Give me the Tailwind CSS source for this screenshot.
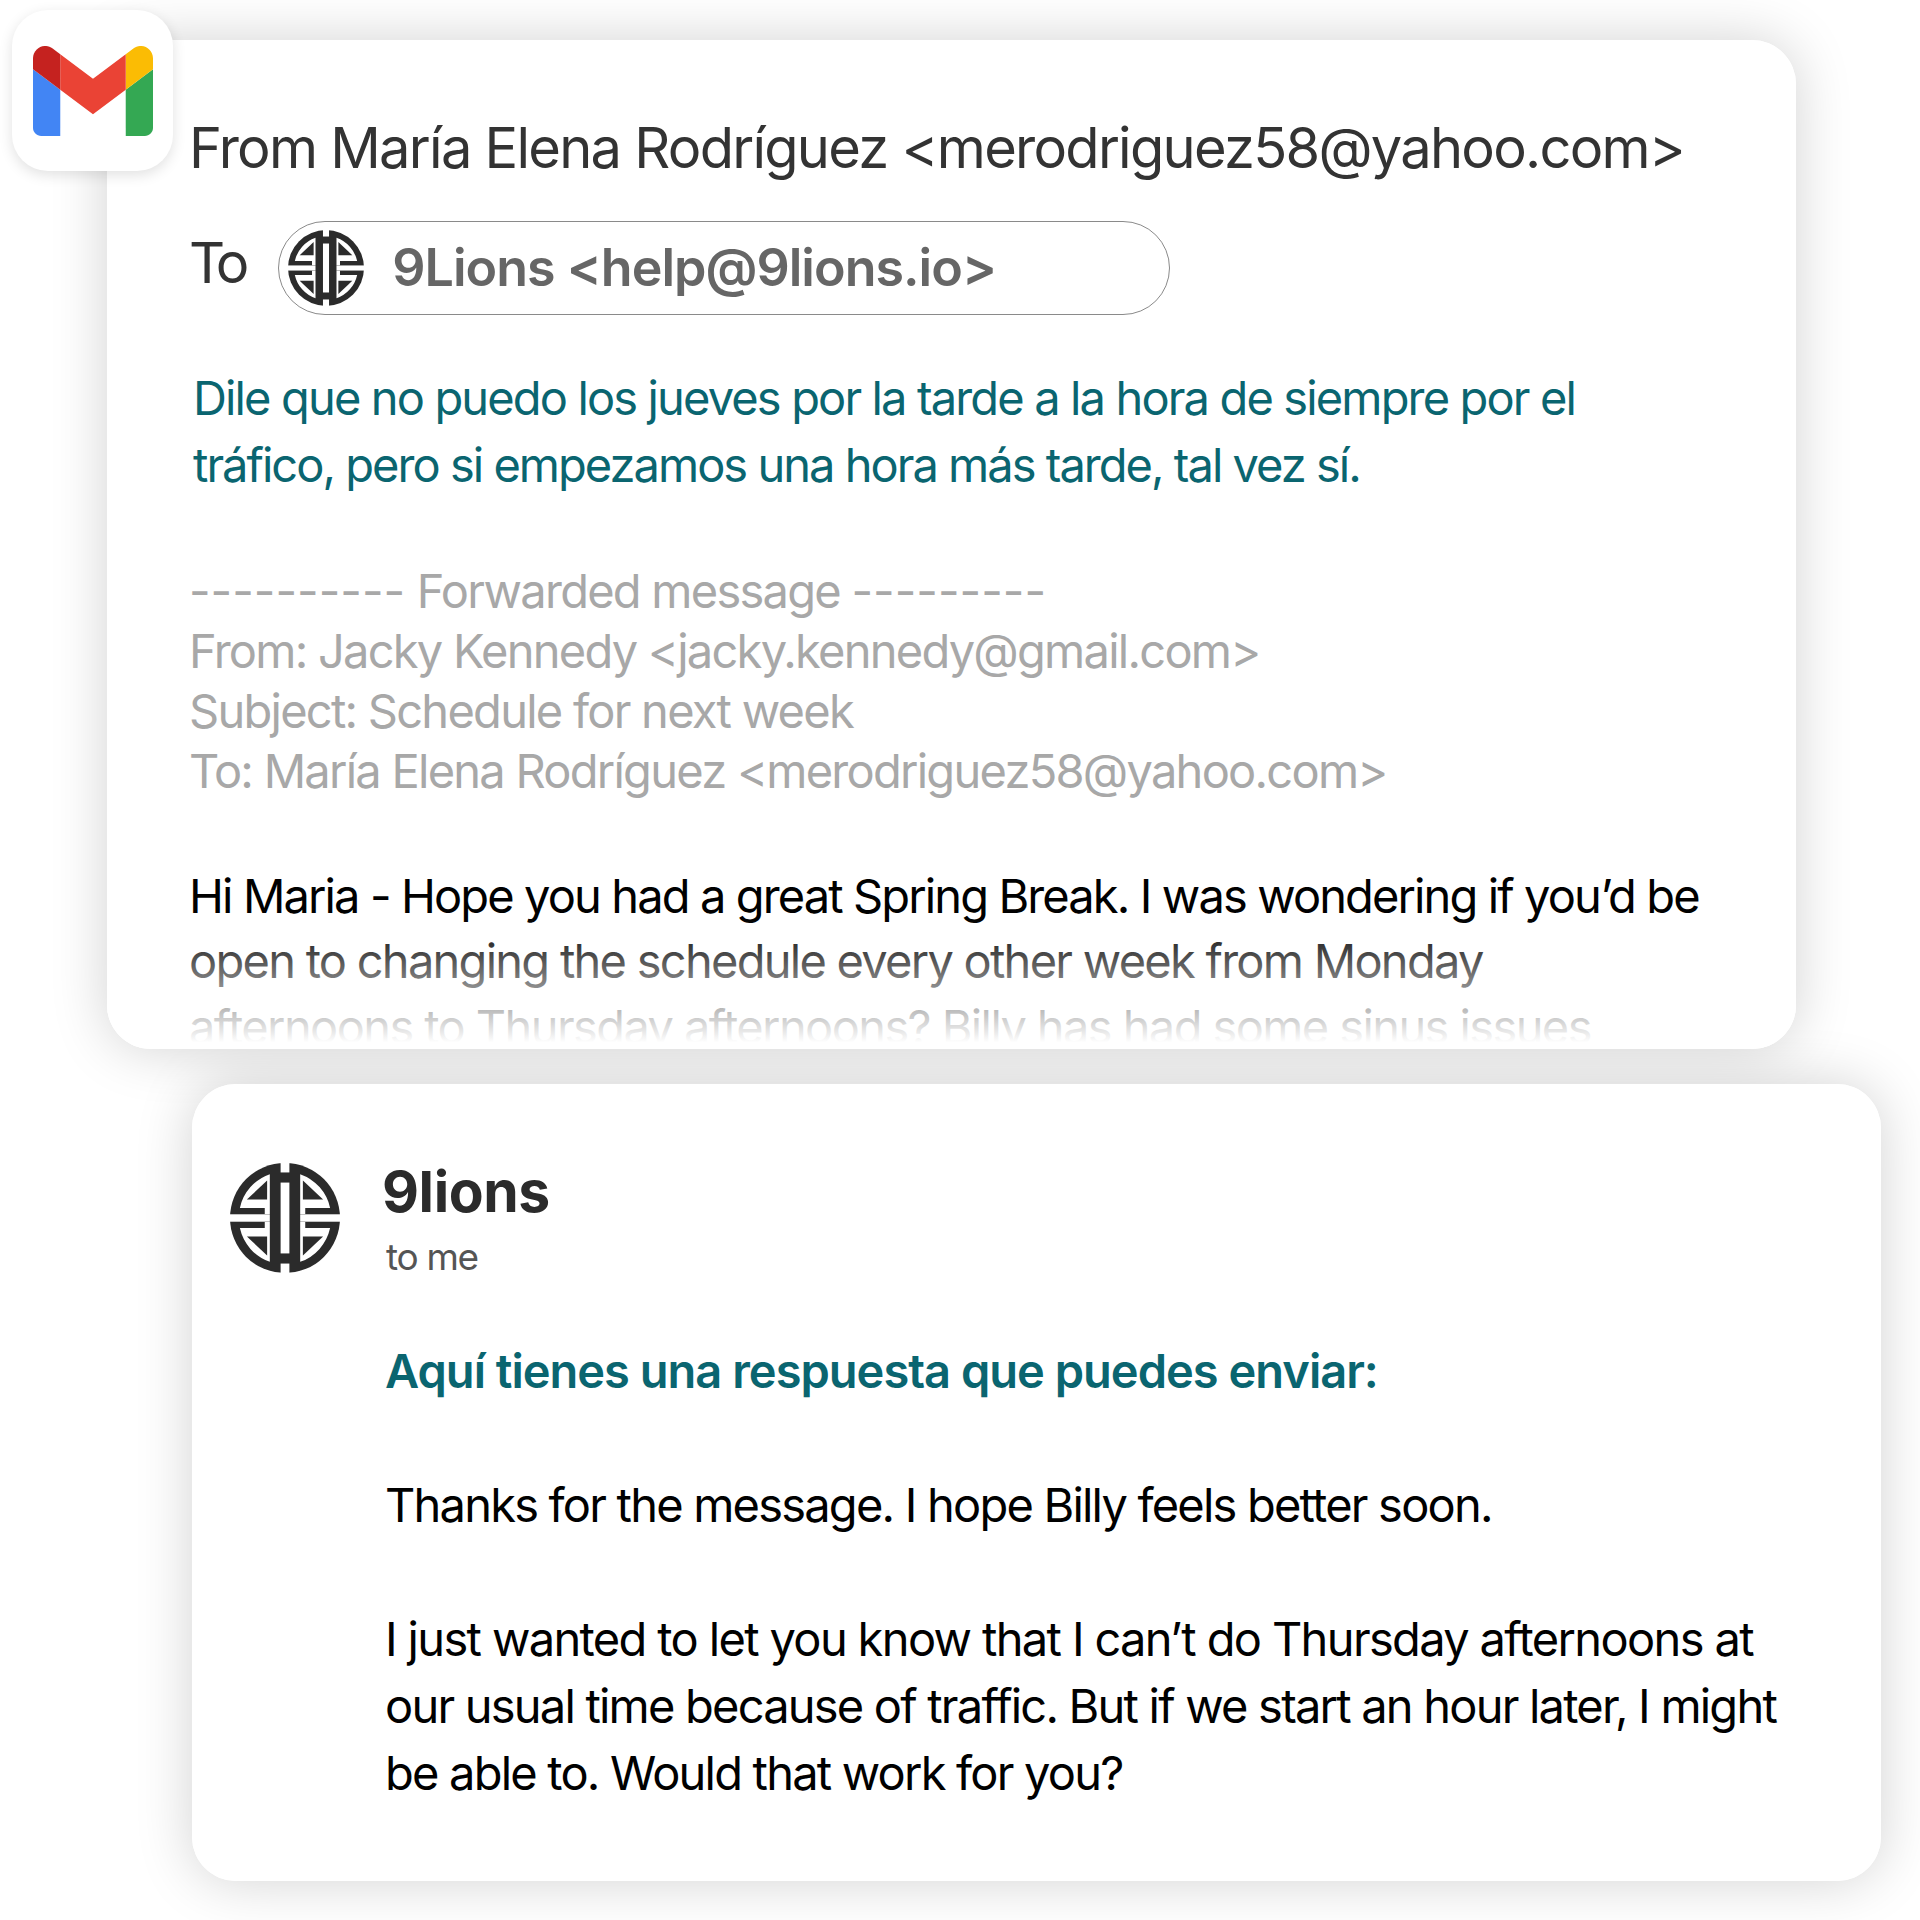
<!DOCTYPE html>
<html><head><meta charset="utf-8"><script src="https://cdn.jsdelivr.net/npm/@tailwindcss/browser@4"></script></head>
<body class="bg-white">
<svg class="absolute w-0 h-0"><defs>
<g id="q"><path fill="#fff" d="M-45-130A137 137 0 0 0-133.7-30H-60V-12H-45Z"/><path fill="#2b2b2b" d="M-53-111L-113-55H-53Z"/><rect fill="#fff" x="-170" y="-11" width="125" height="11"/></g>
<symbol id="lions" viewBox="-163 -163 326 326"><circle r="163" fill="#2b2b2b"/><use href="#q"/><use href="#q" transform="scale(-1 1)"/><use href="#q" transform="scale(1 -1)"/><use href="#q" transform="scale(-1 -1)"/><rect fill="#fff" x="-13" y="-105" width="26" height="210"/><rect fill="#fff" x="-13" y="-170" width="26" height="35"/><rect fill="#fff" x="-13" y="135" width="26" height="35"/></symbol>
</defs></svg>
<div class="relative isolate w-[1920px] h-[1920px] overflow-hidden bg-white pt-[40px] font-['Inter',sans-serif]">
  <div class="absolute left-[12px] top-[10px] z-20 w-[161px] h-[161px] rounded-[36px] bg-white shadow-[0_4px_14px_rgba(0,0,0,0.12)] flex items-center justify-center">
    <svg class="w-[120px] h-[90px]" viewBox="52 42 88 66"><path fill="#4285f4" d="M58 108h14V74L52 59v43c0 3.32 2.69 6 6 6"/><path fill="#34a853" d="M120 108h14c3.32 0 6-2.69 6-6V59l-20 15"/><path fill="#fbbc04" d="M120 48v26l20-15v-8c0-7.42-8.47-11.65-14.4-7.2"/><path fill="#ea4335" d="M72 74V48l24 18 24-18v26L96 92"/><path fill="#c5221f" d="M52 51v8l20 15V48l-5.6-4.2c-5.94-4.45-14.4-.22-14.4 7.2"/></svg>
  </div>
  <div class="relative ml-[107px] w-[1689px] h-[1009px] rounded-[44px] bg-white">
    <div class="absolute inset-0 -z-10 rounded-[44px] shadow-[0_0_56px_rgba(0,0,0,0.18)]"></div>
    <div class="relative h-full overflow-hidden rounded-[44px] pl-[82px] pt-[74px] whitespace-nowrap">
      <div class="text-[56px] leading-[68px] text-[#333] tracking-[-0.031em]">From María Elena Rodríguez &lt;merodriguez58@yahoo.com&gt;</div>
      <div class="mt-[39px] flex items-center gap-[34px]">
        <span class="text-[56px] leading-[68px] text-[#333] -mt-[10px] tracking-[-0.09em]">To</span>
        <div class="w-[892px] h-[94px] rounded-full border-[1.5px] border-[#8a8a8a] flex items-center pl-[9px] gap-[28px]">
          <svg class="w-[76px] h-[76px] shrink-0"><use href="#lions"/></svg>
          <span class="text-[52px] font-semibold text-[#666] tracking-[-0.019em]">9Lions &lt;help@9lions.io&gt;</span>
        </div>
      </div>
      <div class="mt-[49px] ml-[4px] text-[47px] leading-[67px] text-[#0a6570] tracking-[-0.0395em]">
        <div>Dile que no puedo los jueves por la tarde a la hora de siempre por el</div>
        <div class="tracking-[-0.042em]">tráfico, pero si empezamos una hora más tarde, tal vez sí.</div>
      </div>
      <div class="mt-[63px] text-[47px] leading-[60px] text-[#a8a8a8] tracking-[-0.037em]">
        <div><span class="tracking-[0em]">----------</span> Forwarded message <span class="tracking-[0em]">---------</span></div>
        <div>From: Jacky Kennedy &lt;jacky.kennedy@gmail.com&gt;</div>
        <div>Subject: Schedule for next week</div>
        <div>To: María Elena Rodríguez &lt;merodriguez58@yahoo.com&gt;</div>
      </div>
      <div class="mt-[62px] text-[47px] leading-[65px] text-black tracking-[-0.04em]">
        <div>Hi Maria - Hope you had a great Spring Break. I was wondering if you’d be</div>
        <div class="tracking-[-0.037em]">open to changing the schedule every other week from Monday</div>
        <div class="tracking-[-0.034em] mt-[1px]">afternoons to Thursday afternoons? Billy has had some sinus issues</div>
      </div>
      <div class="absolute left-0 right-0 bottom-0 h-[130px] bg-gradient-to-t from-white from-5% to-white/0"></div>
    </div>
  </div>
  <div class="relative mt-[35px] ml-[192px] w-[1689px] h-[797px] rounded-[44px] bg-white pl-[38px] pt-[79px] whitespace-nowrap">
    <div class="absolute inset-0 -z-10 rounded-[44px] shadow-[0_0_56px_rgba(0,0,0,0.18)]"></div>
    <div class="flex gap-[42px]">
      <svg class="w-[110px] h-[110px] shrink-0"><use href="#lions"/></svg>
      <div>
        <div class="text-[57px] leading-[70px] font-bold text-[#2b2b2b] -mt-[6px] tracking-[-0.007em]">9lions</div>
        <div class="text-[37px] leading-[50px] text-[#555] ml-[4px] mt-[5px] tracking-[-0.035em]">to me</div>
      </div>
    </div>
    <div class="ml-[155px] mt-[55px] text-[47px] leading-[67px] text-black tracking-[-0.038em]">
      <div class="font-semibold text-[#0a6570] tracking-[-0.021em]">Aquí tienes una respuesta que puedes enviar:</div>
      <div class="mt-[67px]">Thanks for the message. I hope Billy feels better soon.</div>
      <div class="mt-[67px] tracking-[-0.035em]">I just wanted to let you know that I can’t do Thursday afternoons at</div>
      <div>our usual time because of traffic. But if we start an hour later, I might</div>
      <div>be able to. Would that work for you?</div>
    </div>
  </div>
</div>
</body></html>
